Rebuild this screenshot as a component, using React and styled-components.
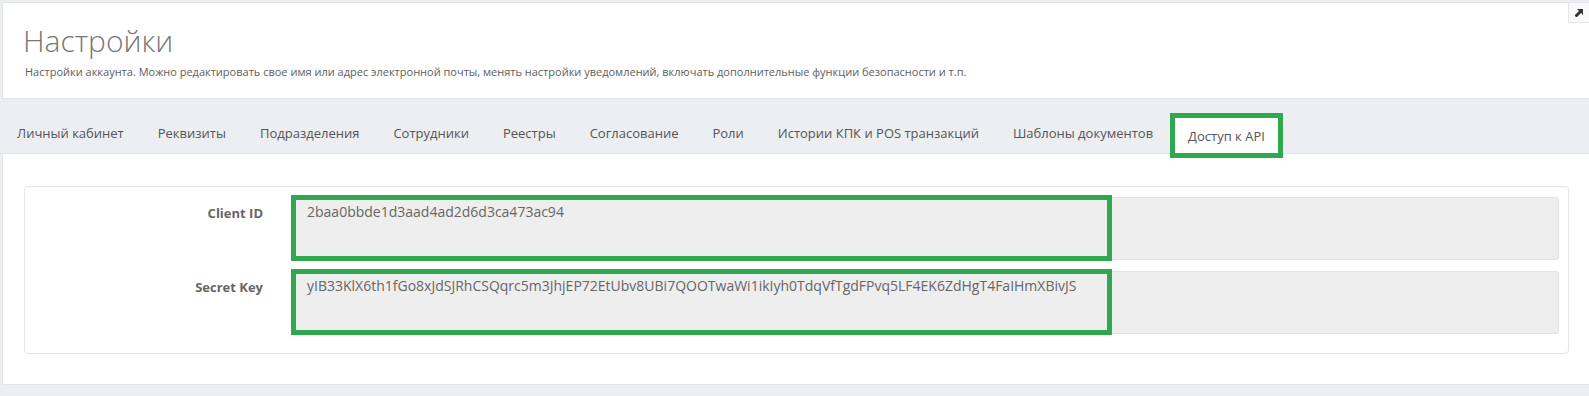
import styled, { createGlobalStyle } from "styled-components"

const GlobalStyle = createGlobalStyle`
  html, body {
    margin: 0;
    background-color: #eceef2;
    font-family: "Open Sans", "Liberation Sans", sans-serif;
  }
`

const Page = styled.div`
  padding: 2px 0 12px 2px;
`
const Header = styled.header`
  position: relative;
  height: 95px;
  padding: 0 20px;
  background-color: #fff;
  border: 1px solid #e2e5e9;
  border-right: none;
`
const Title = styled.h1`
  margin: 0;
  padding-top: 19px;
  font-size: 30px;
  font-weight: 300;
  line-height: 38px;
  color: #777;
`
const Subtitle = styled.p`
  margin: 4px 0 0 2px;
  font-size: 11px;
  line-height: 16px;
  color: #5e5e5e;
`
const CornerButton = styled.button`
  position: absolute;
  top: 0;
  right: 0;
  width: 21px;
  height: 20px;
  padding: 0;
  display: flex;
  align-items: center;
  justify-content: center;
  background-color: #fafafa;
  border: 1px solid #e2e5e9;
  border-top: none;
  border-right: none;
`
const Tabs = styled.nav`
  display: flex;
  align-items: flex-end;
  height: 40px;
  margin-left: -2px;
  padding-top: 14px;
  border-bottom: 1px solid #dfe2e6;
`
const Tab = styled.div`
  position: relative;
  box-sizing: border-box;
  height: ${(p) => (p.$active ? "45px" : "40px")};
  margin-bottom: ${(p) => (p.$active ? "-5px" : "0")};
  padding: 0 ${(p) => (p.$active ? "13px" : "17px")};
  display: flex;
  align-items: center;
  font-size: 13px;
  color: #555;
  white-space: nowrap;
  background-color: ${(p) => (p.$active ? "#fff" : "transparent")};
  border: ${(p) => (p.$active ? "5px solid #2fa84f" : "none")};
  z-index: 1;
`
const Panel = styled.section`
  padding: 32px 20px 30px 21px;
  background-color: #fff;
  border: 1px solid #e2e5e9;
  border-top: none;
  border-right: none;
`
const Box = styled.div`
  display: flex;
  flex-direction: column;
  gap: 11px;
  padding: 10px 9px 19px 10px;
  border: 1px solid #e4e4e4;
  border-radius: 4px;
`
const Row = styled.div`
  display: grid;
  grid-template-columns: 228px 1fr;
  column-gap: 31px;
`
const Label = styled.label`
  padding-top: 7px;
  text-align: right;
  font-size: 13px;
  font-weight: 700;
  line-height: 18px;
  color: #666;
`
const Field = styled.div`
  position: relative;
  box-sizing: border-box;
  height: 63px;
  padding: 4px 12px;
  font-size: 14px;
  line-height: 20px;
  color: #666;
  background-color: #eeeeee;
  border: 1px solid #e2e2e2;
  border-radius: 3px;
`
const Highlight = styled.span`
  position: absolute;
  top: -3px;
  left: -4px;
  width: 821px;
  height: 66px;
  box-sizing: border-box;
  border: 5px solid #2fa84f;
  pointer-events: none;
`

const tabs = [
  "Личный кабинет",
  "Реквизиты",
  "Подразделения",
  "Сотрудники",
  "Реестры",
  "Согласование",
  "Роли",
  "Истории КПК и POS транзакций",
  "Шаблоны документов",
  "Доступ к API",
]

const fields = [
  { label: "Client ID", value: "2baa0bbde1d3aad4ad2d6d3ca473ac94" },
  {
    label: "Secret Key",
    value:
      "yIB33KlX6th1fGo8xJdSJRhCSQqrc5m3JhjEP72EtUbv8UBi7QOOTwaWi1ikIyh0TdqVfTgdFPvq5LF4EK6ZdHgT4FaIHmXBivJS",
  },
]

function App() {
  return (
    <>
      <GlobalStyle />
      <Page>
        <Header>
          <Title>Настройки</Title>
          <Subtitle>
            Настройки аккаунта. Можно редактировать свое имя или адрес электронной почты, менять
            настройки уведомлений, включать дополнительные функции безопасности и т.п.
          </Subtitle>
          <CornerButton>
            <svg width="8" height="8" viewBox="0 0 8 8">
              <path d="M2 0h6v6L6 4 1.5 8.5 -0.5 6.5 4 2z" fill="#333" />
            </svg>
          </CornerButton>
        </Header>
        <Tabs>
          {tabs.map((tab, i) => (
            <Tab key={tab} $active={i === tabs.length - 1}>
              {tab}
            </Tab>
          ))}
        </Tabs>
        <Panel>
          <Box>
            {fields.map((field) => (
              <Row key={field.label}>
                <Label>{field.label}</Label>
                <Field>
                  {field.value}
                  <Highlight />
                </Field>
              </Row>
            ))}
          </Box>
        </Panel>
      </Page>
    </>
  )
}

export default App
